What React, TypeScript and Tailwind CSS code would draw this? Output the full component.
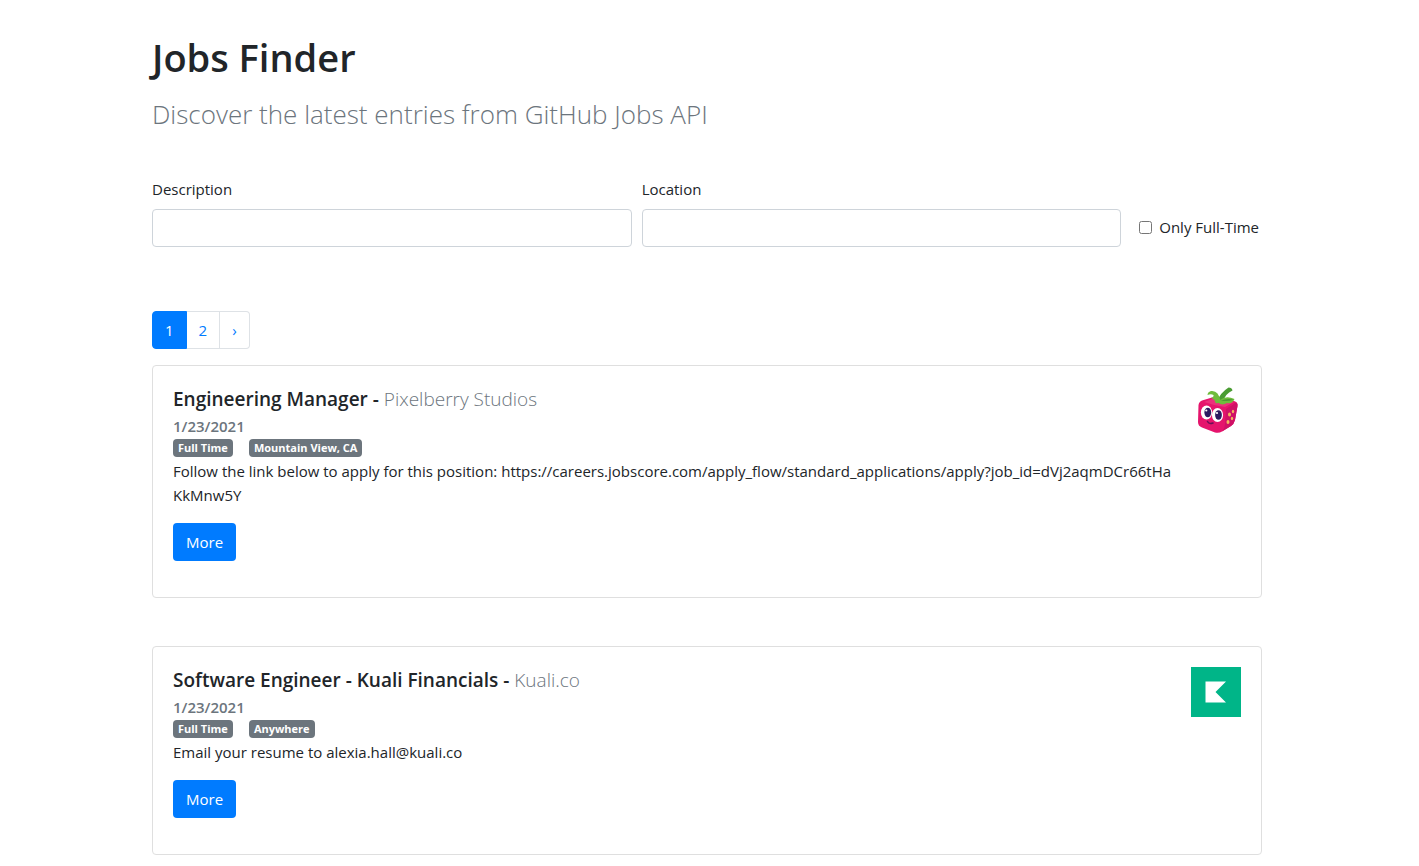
import { useState } from "react";

type Job = {
  title: string;
  company: string;
  date: string;
  type: string;
  location: string;
  apply: string;
  logo: React.ReactNode;
};

function PixelberryLogo() {
  return (
    <svg viewBox="0 0 50 50" className="size-[50px] shrink-0" role="img" aria-label="Pixelberry Studios">
      <path d="M7.500 19 Q8 15.500 11 14.500 L21 11.500 L43 15 Q47 16 46.500 20 L44 34 Q43 38 40 40 L31 45.500 Q28 47.500 24 46.500 L11 41.500 Q7 40 7 36 Z" fill="#e5146c" />
      <path d="M35 23 L45.500 16.500 Q47 17.500 46.500 20 L44 34 Q43 38 40 40 L31 45.500 Q34 42 34 38 Z" fill="#cf1166" />
      <path d="M13 16 L22 12.500 L43 16 L34 21 Q23 19.500 13 16 Z" fill="#ec2f7c" />
      <path d="M26.500 15 Q29 7 37.500 1.500 Q41 1.500 41.500 4.500 Q34 8 32.500 15 Z" fill="#4a9c33" />
      <path d="M29.500 15 Q27.500 4 20 5 Q16.500 6 16.500 9 Q20 7.500 22.500 9 Q23 11 20 12 Q24 13 24.500 17 Q28 18 29.500 15 Z" fill="#6fbc3c" />
      <path d="M29 14 Q35 9 43.500 13 Q41 18.500 36 17 Q31 20 27 16.500 Z" fill="#6fbc3c" />
      <path d="M30 14.500 Q36 12 42.500 13.500 Q37 16 30 14.500 Z" fill="#4a9c33" />
      <ellipse cx="15.500" cy="26.500" rx="5.600" ry="7" fill="#fff" />
      <ellipse cx="26.500" cy="29" rx="5.600" ry="7" fill="#fff" />
      <ellipse cx="16.800" cy="26.500" rx="3.400" ry="4.800" fill="#2c1a61" />
      <ellipse cx="27.500" cy="29" rx="3.400" ry="4.800" fill="#2c1a61" />
      <circle cx="15.300" cy="24.500" r="1.100" fill="#fff" />
      <circle cx="26" cy="27" r="1.100" fill="#fff" />
      <path d="M16.500 35.500 Q18 38.500 22 37" fill="none" stroke="#6a1057" strokeWidth="1.600" strokeLinecap="round" />
      <g fill="#f2b35e">
        <ellipse cx="38.500" cy="28.500" rx="1.500" ry="1.900" />
        <ellipse cx="42" cy="25.500" rx="1.200" ry="1.700" />
        <ellipse cx="37" cy="36" rx="1.500" ry="1.900" />
        <ellipse cx="41" cy="32.500" rx="1.200" ry="1.700" />
      </g>
    </svg>
  );
}

function KualiLogo() {
  return (
    <svg viewBox="0 0 50 50" className="size-[50px] shrink-0" role="img" aria-label="Kuali">
      <path d="M0 0H50V50H0Z" fill="#00b588" />
      <path d="M14.500 14.500H35L24.500 25L35 35.500H14.500Z" fill="#fff" />
    </svg>
  );
}

const jobs: Job[] = [
  {
    title: "Engineering Manager",
    company: "Pixelberry Studios",
    date: "1/23/2021",
    type: "Full Time",
    location: "Mountain View, CA",
    apply:
      "Follow the link below to apply for this position: https://careers.jobscore.com/apply_flow/standard_applications/apply?job_id=dVj2aqmDCr66tHa KkMnw5Y",
    logo: <PixelberryLogo />,
  },
  {
    title: "Software Engineer - Kuali Financials",
    company: "Kuali.co",
    date: "1/23/2021",
    type: "Full Time",
    location: "Anywhere",
    apply: "Email your resume to alexia.hall@kuali.co",
    logo: <KualiLogo />,
  },
];

function Badge({ children }: { children: React.ReactNode }) {
  return (
    <span className="rounded bg-[#6c757d] px-[5px] text-[11px] leading-[18px] font-bold text-white">{children}</span>
  );
}

function JobCard({ job }: { job: Job }) {
  return (
    <article className="flex justify-between rounded border border-[#dfdfdf] p-5">
      <div className="min-w-0">
        <h2 className="text-[19px] leading-[26px] font-semibold">
          {job.title} - <span className="font-light text-[#6c757d]">{job.company}</span>
        </h2>
        <p className="mt-[2px] text-[15px] leading-6 font-semibold text-[#6c757d]">{job.date}</p>
        <div className="mt-px mb-[2px] flex gap-4">
          <Badge>{job.type}</Badge>
          <Badge>{job.location}</Badge>
        </div>
        <p>{job.apply}</p>
        <button type="button" className="my-4 h-[38px] rounded bg-[#007bff] px-[13px] text-white">
          More
        </button>
      </div>
      {job.logo}
    </article>
  );
}

export default function App() {
  const [page, setPage] = useState(1);
  const pageClass = "flex items-center border px-3";
  const idle = "border-[#dee2e6]";
  const active = "border-[#007bff] bg-[#007bff] text-white";
  const field = "mt-2 h-[38px] w-full rounded border border-[#ced4da] px-3 outline-none focus:border-[#80bdff]";

  return (
    <div className="bg-white pr-[5px] font-['Open_Sans','Noto_Sans',sans-serif] text-[15px] leading-6 text-[#212529]">
      <main className="mx-auto max-w-[1110px] pt-[33px] pb-8">
        <h1 className="text-[38px] leading-[48px] font-semibold">Jobs Finder</h1>
        <p className="mt-4 text-[26px] leading-[34px] font-light text-[#6c757d]">
          Discover the latest entries from GitHub Jobs API
        </p>

        <form className="mt-[46px] flex items-end gap-[10px]" onSubmit={(e) => e.preventDefault()}>
          <div className="flex-1">
            <label htmlFor="description">Description</label>
            <input id="description" type="text" className={field} />
          </div>
          <div className="flex-1">
            <label htmlFor="location">Location</label>
            <input id="location" type="text" className={field} />
          </div>
          <div className="ml-2 flex h-10 items-center gap-[7px] pr-[3px]">
            <input id="full-time" type="checkbox" className="size-[13px]" />
            <label htmlFor="full-time">Only Full-Time</label>
          </div>
        </form>

        <nav aria-label="Pages" className="mt-16 mb-4 flex h-[38px] text-[#007bff]">
          <button type="button" onClick={() => setPage(1)} className={`${pageClass} rounded-l ${page === 1 ? active : idle}`}>
            1
          </button>
          <button type="button" onClick={() => setPage(2)} className={`${pageClass} border-l-0 ${page === 2 ? active : idle}`}>
            2
          </button>
          <button type="button" aria-label="Next" onClick={() => setPage(2)} className={`${pageClass} ${idle} rounded-r border-l-0`}>
            ›
          </button>
        </nav>

        <div className="flex flex-col gap-12">
          {jobs.map((job) => (
            <JobCard key={job.title} job={job} />
          ))}
        </div>
      </main>
    </div>
  );
}
